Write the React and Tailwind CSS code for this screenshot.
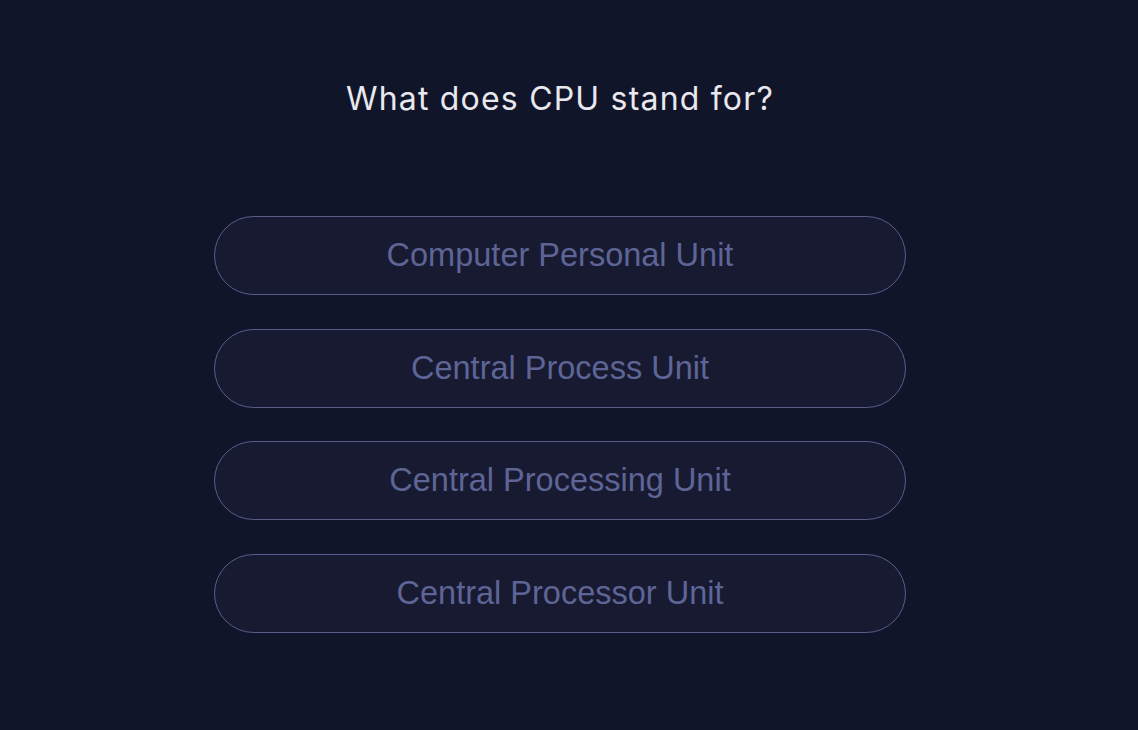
export default function App() {
  const options = [
    "Computer Personal Unit",
    "Central Process Unit",
    "Central Processing Unit",
    "Central Processor Unit",
  ];
  return (
    <div className="min-h-[730px] w-full bg-[#10152a]">
      <div className="w-[1120px] flex flex-col items-center pt-[79px]">
        <h1
          className="text-[32px] leading-[40px] tracking-[1.2px] text-[#e8e8ee] font-normal"
          style={{ fontFamily: "Inter, 'DejaVu Sans', sans-serif" }}
        >
          What does CPU stand for?
        </h1>
        <div className="mt-[97px] flex flex-col gap-[33.5px]">
          {options.map((o) => (
            <button
              key={o}
              className="w-[692px] h-[79px] rounded-full border border-[#595e8c] bg-[#171a31] text-[#5e6596] text-[32.5px]"
              style={{ fontFamily: "'Liberation Sans', Arial, sans-serif" }}
            >
              {o}
            </button>
          ))}
        </div>
      </div>
    </div>
  );
}
